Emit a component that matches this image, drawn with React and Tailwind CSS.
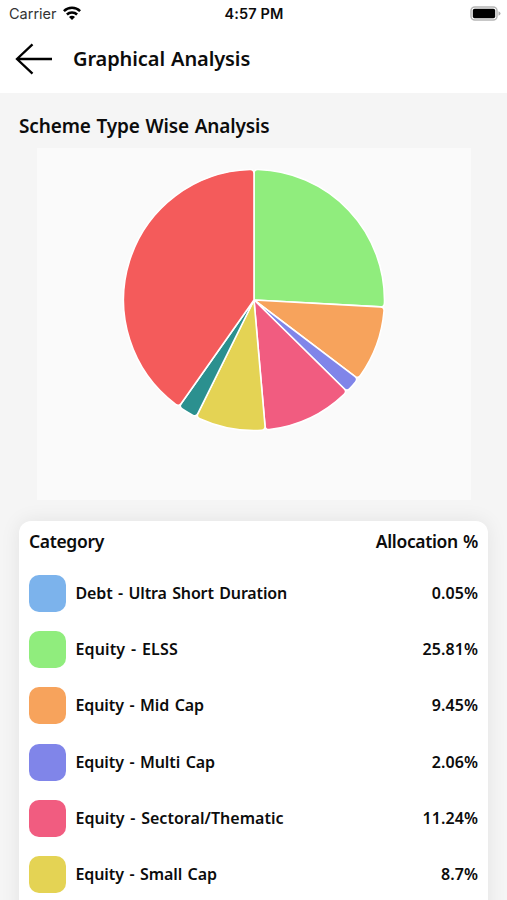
const CATEGORIES = [
  { name: "Debt - Ultra Short Duration", value: "0.05%", swatch: "bg-[#7cb3ec]", tracking: "tracking-[-0.15px]" },
  { name: "Equity - ELSS", value: "25.81%", swatch: "bg-[#90ed7d]", tracking: "tracking-[0.13px]" },
  { name: "Equity - Mid Cap", value: "9.45%", swatch: "bg-[#f7a35c]", tracking: "tracking-[-0.1px]" },
  { name: "Equity - Multi Cap", value: "2.06%", swatch: "bg-[#8085e9]", tracking: "tracking-[-0.1px]" },
  { name: "Equity - Sectoral/Thematic", value: "11.24%", swatch: "bg-[#f15c80]", tracking: "tracking-[0.03px]" },
  { name: "Equity - Small Cap", value: "8.7%", swatch: "bg-[#e4d354]", tracking: "tracking-[-0.1px]" },
];

const SLICES = [
  { value: 25.86, color: "#90ed7d" },
  { value: 9.45, color: "#f7a35c" },
  { value: 2.06, color: "#8085e9" },
  { value: 11.24, color: "#f15c80" },
  { value: 8.7, color: "#e4d354" },
  { value: 2.45, color: "#2b908f" },
  { value: 40.24, color: "#f45b5b" },
];

const CX = 217;
const CY = 152;
const R = 130.5;
const CORNER = 4;

function point(angle, radius) {
  return `${(CX + radius * Math.sin(angle)).toFixed(2)} ${(CY - radius * Math.cos(angle)).toFixed(2)}`;
}

// A wedge whose two outer corners are rounded.
function slicePath(start, end) {
  const d = CORNER / R;
  const large = end - start > Math.PI ? 1 : 0;
  return [
    `M${CX} ${CY}`,
    `L${point(start, R - CORNER)}`,
    `Q${point(start, R)} ${point(start + d, R)}`,
    `A${R} ${R} 0 ${large} 1 ${point(end - d, R)}`,
    `Q${point(end, R)} ${point(end, R - CORNER)}`,
    "Z",
  ].join(" ");
}

function PieChart() {
  let total = 0;
  return (
    <svg className="block h-[352px] w-[434px]" viewBox="0 0 434 352">
      {SLICES.map((slice) => {
        const start = (total / 100) * Math.PI * 2;
        total += slice.value;
        const end = (total / 100) * Math.PI * 2;
        return (
          <path
            key={slice.color}
            d={slicePath(start, end)}
            fill={slice.color}
            stroke="#ffffff"
            strokeWidth="1.6"
            strokeLinejoin="round"
          />
        );
      })}
    </svg>
  );
}

function StatusBar() {
  return (
    <div className="grid h-7 grid-cols-3 items-center pl-[9px] pr-[6px] font-['Inter',sans-serif]">
      <div className="flex items-center gap-[6px]">
        <span className="text-[14.5px] font-normal leading-5 text-[#333]">Carrier</span>
        <svg className="mb-[2px] h-[14px] w-[18px]" viewBox="0 0 18 14" fill="none" stroke="#000" strokeWidth="2.5">
          <path d="M.9 5.2a11.5 11.5 0 0 1 16.2 0" />
          <path d="M3.9 8.5a7.2 7.2 0 0 1 10.2 0" />
          <path d="M9 14 6 11a4.2 4.2 0 0 1 6 0Z" fill="#000" stroke="none" />
        </svg>
      </div>
      <span className="pr-[2px] text-center text-[14.5px] font-semibold leading-5 tracking-[0.1px]">4:57 PM</span>
      <svg className="mb-[2px] h-[15px] w-[31px] justify-self-end" viewBox="0 0 31 15">
        <rect x="1" y="1" width="26" height="13" rx="3.8" fill="#fff" stroke="#b5b5b5" strokeWidth="1.5" />
        <rect x="2.8" y="2.8" width="22.4" height="9.4" rx="1.8" fill="#000" />
        <path d="M28.5 5.2q2 .8 2 2.3t-2 2.3Z" fill="#aaa" />
      </svg>
    </div>
  );
}

export default function App() {
  return (
    <div className="flex h-[900px] w-[507px] flex-col overflow-hidden bg-[#f5f5f5] font-['Noto_Sans',sans-serif] font-semibold text-[#0c0c0c]">
      <header className="h-[93px] shrink-0 bg-white">
        <StatusBar />
        <div className="flex h-[62px] items-center gap-[20px] pl-[15px]">
          <svg className="h-8 w-[38px]" viewBox="0 0 38 32" fill="none" stroke="#000" strokeWidth="2.3">
            <path d="M37 16H2M17.5 1.3 2 16l15.5 14.7" />
          </svg>
          <h1 className="whitespace-nowrap text-[20px] leading-7 tracking-[-0.1px] [word-spacing:1px]">Graphical Analysis</h1>
        </div>
      </header>
      <h2 className="ml-[19px] mt-[19px] shrink-0 whitespace-nowrap text-[19px] leading-7 tracking-[-0.15px] [word-spacing:1px]">
        Scheme Type Wise Analysis
      </h2>
      <div className="mx-auto mt-[8px] w-[434px] shrink-0 bg-[#fafafa]">
        <PieChart />
      </div>
      <section className="mx-[19px] mt-[21px] h-[420px] shrink-0 rounded-[12px] bg-white px-[10px] shadow-[0_0_20px_rgba(0,0,0,0.08)]">
        <div className="flex h-[44px] items-center justify-between pb-[3px] text-[17.5px] tracking-[-0.35px]">
          <span>Category</span>
          <span className="[word-spacing:1px]">Allocation %</span>
        </div>
        <ul className="pt-[0.5px]">
          {CATEGORIES.map((item) => (
            <li key={item.name} className="flex h-[56.2px] items-center">
              <span className={`size-[37px] shrink-0 rounded-[10px] ${item.swatch}`} />
              <span className={`ml-[9.5px] whitespace-nowrap pb-[1px] text-[16px] [word-spacing:1.5px] ${item.tracking}`}>{item.name}</span>
              <span className="ml-auto pb-[1px] text-[16px] tracking-[0.1px]">{item.value}</span>
            </li>
          ))}
        </ul>
      </section>
    </div>
  );
}
